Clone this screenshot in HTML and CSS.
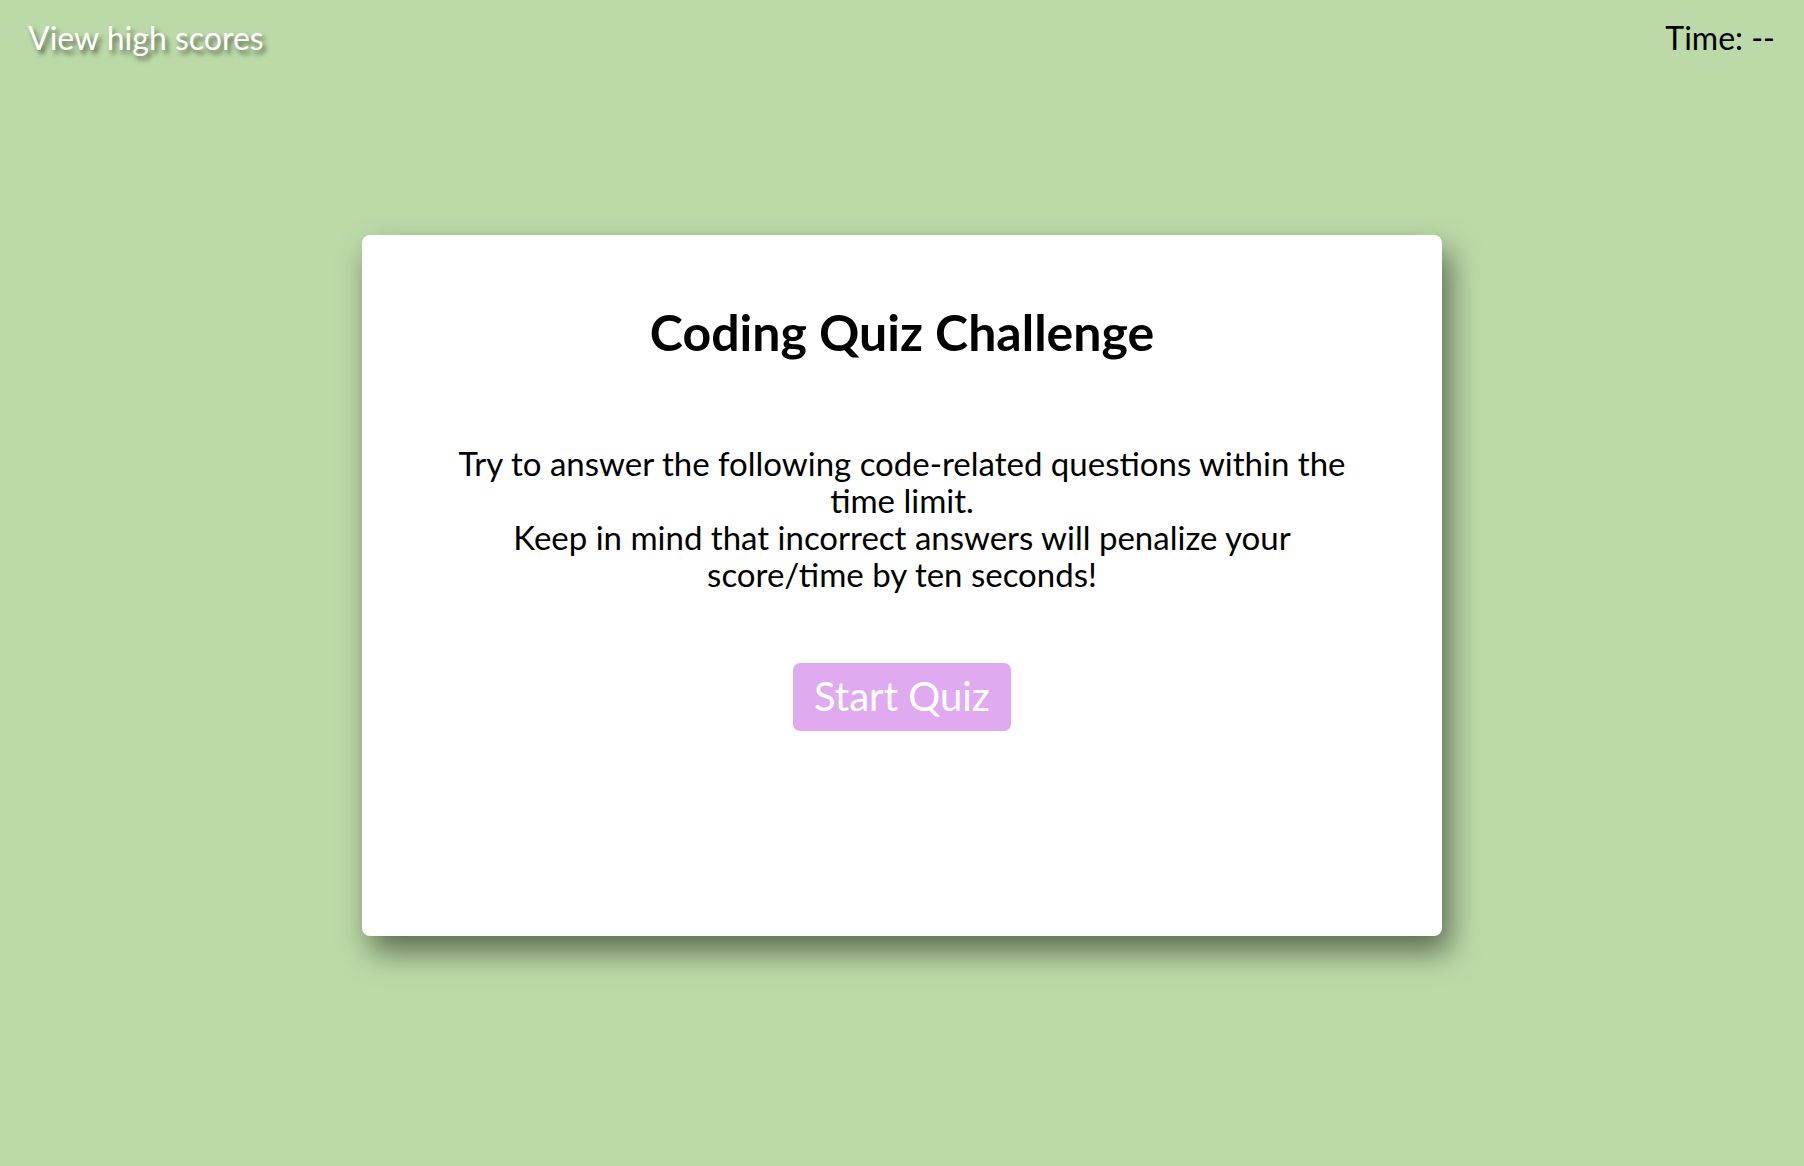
FILE: index.html
```html
<!DOCTYPE html>
<html lang="en">
<head>
<meta charset="utf-8">
<title>Coding Quiz Challenge</title>
<link rel="stylesheet" href="styles.css">
</head>
<body>
<header class="top-bar">
  <a class="scores-link" href="#">View high scores</a>
  <div class="timer">Time: <span>--</span></div>
</header>
<main class="stage">
  <section class="card">
    <h1 class="card-title">Coding Quiz Challenge</h1>
    <p class="card-text">Try to answer the following code-related questions within the time limit.<br>Keep in mind that incorrect answers will penalize your score/time by ten seconds!</p>
    <button class="start-btn" type="button">Start Quiz</button>
  </section>
</main>
</body>
</html>
```
FILE: styles.css
```css
* { box-sizing: border-box; }
html, body { height: 100%; }
body {
  margin: 0;
  background: #bcdaa8;
  font-family: Lato, "Open Sans", sans-serif;
  color: #000;
  font-size: 32px;
}
.top-bar {
  display: flex;
  justify-content: space-between;
  align-items: flex-start;
  padding: 18px 29px 0 28px;
  height: 80px;
}
.scores-link {
  color: #fff;
  text-decoration: none;
  text-shadow: 3px 4px 5px rgba(0,0,0,0.55);
}
.timer { color: #000; }
.stage {
  display: flex;
  justify-content: center;
  padding-top: 155px;
}
.card {
  width: 1080px;
  height: 701px;
  background: #fff;
  border-radius: 8px;
  box-shadow: 8px 16px 30px rgba(0,0,0,0.5);
  display: flex;
  flex-direction: column;
  align-items: center;
  padding: 67px 60px 0;
  text-align: center;
}
.card-title {
  margin: 0;
  font-size: 50px;
  font-weight: 700;
}
.card-text {
  margin: 83px 0 0;
  line-height: 37px;
  font-size: 33px;
  width: 910px;
}
.start-btn {
  margin-top: 70px;
  font-family: inherit;
  font-size: 40px;
  color: #fff;
  background: #dfaaf0;
  border: none;
  border-radius: 7px;
  padding: 9px 21px 11px;
  cursor: pointer;
}
```
